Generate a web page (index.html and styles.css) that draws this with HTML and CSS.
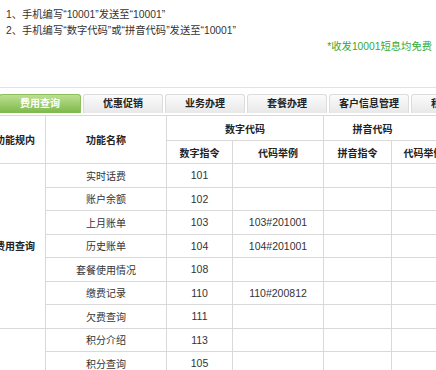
FILE: index.html
```html
<!DOCTYPE html>
<html lang="zh-CN">
<head>
<meta charset="utf-8">
<link rel="stylesheet" href="styles.css">
</head>
<body>
<div class="page">
  <div class="intro">
    <p class="line">1、手机编写“10001”发送至“10001”</p>
    <p class="line">2、手机编写“数字代码”或“拼音代码”发送至“10001”</p>
    <p class="note">*收发10001短息均免费</p>
  </div>
  <div class="tabs">
    <div class="tab active">费用查询</div>
    <div class="tab">优惠促销</div>
    <div class="tab">业务办理</div>
    <div class="tab">套餐办理</div>
    <div class="tab">客户信息管理</div>
    <div class="tab">积分服务</div>
  </div>
  <table class="codes">
    <colgroup>
      <col class="c0"><col class="c1"><col class="c2"><col class="c3"><col class="c4"><col class="c5">
    </colgroup>
    <thead>
      <tr class="h1">
        <th rowspan="2">功能规内</th>
        <th rowspan="2">功能名称</th>
        <th colspan="2">数字代码</th>
        <th colspan="2" class="py">拼音代码</th>
      </tr>
      <tr class="h2">
        <th>数字指令</th>
        <th>代码举例</th>
        <th>拼音指令</th>
        <th>代码举例</th>
      </tr>
    </thead>
    <tbody>
      <tr><th class="group" rowspan="7">费用查询</th><td>实时话费</td><td class="num">101</td><td class="num"></td><td></td><td></td></tr>
      <tr><td>账户余额</td><td class="num">102</td><td class="num"></td><td></td><td></td></tr>
      <tr><td>上月账单</td><td class="num">103</td><td class="num">103#201001</td><td></td><td></td></tr>
      <tr><td>历史账单</td><td class="num">104</td><td class="num">104#201001</td><td></td><td></td></tr>
      <tr><td>套餐使用情况</td><td class="num">108</td><td class="num"></td><td></td><td></td></tr>
      <tr><td>缴费记录</td><td class="num">110</td><td class="num">110#200812</td><td></td><td></td></tr>
      <tr><td>欠费查询</td><td class="num">111</td><td class="num"></td><td></td><td></td></tr>
      <tr><th class="group" rowspan="2"></th><td>积分介绍</td><td class="num">113</td><td class="num"></td><td></td><td></td></tr>
      <tr><td>积分查询</td><td class="num">105</td><td class="num"></td><td></td><td></td></tr>
    </tbody>
  </table>
</div>
</body>
</html>
```

FILE: styles.css
```css
html, body {
  margin: 0;
  padding: 0;
  background: #fff;
  overflow: hidden;
}
body {
  font-family: "Liberation Sans", "Noto Sans CJK SC", sans-serif;
  font-size: 10px;
  color: #333;
}
.page {
  width: 436px;
  height: 370px;
  overflow: hidden;
}
.intro {
  height: 81px;
  padding: 7px 4px 0 6px;
  box-sizing: border-box;
  height: 87px;
}
.line {
  margin: 0;
  line-height: 16px;
  font-size: 10.3px;
  color: #333;
}
.note {
  margin: 0;
  line-height: 16px;
  font-size: 10.3px;
  text-align: right;
  color: #33aa33;
}
.tabs {
  border-top: 1px solid #e2e2e2;
  padding-top: 6px;
  display: flex;
  gap: 2px;
  margin-left: -1px;
  white-space: nowrap;
}
.tab {
  flex: 0 0 80px;
  height: 19px;
  box-sizing: border-box;
  line-height: 18px;
  text-align: center;
  font-weight: bold;
  color: #222;
  background: linear-gradient(#fbfbfb, #e8e8e8);
  border: 1px solid #dcdcdc;
  border-bottom: none;
  border-radius: 3px 3px 0 0;
}
.tab.active {
  flex-basis: 82px;
  color: #fff;
  background: linear-gradient(#bde08f, #7cb84a);
  border-color: #8cc05a;
}
.codes {
  margin-top: 2px;
  margin-left: -16px;
  border-collapse: collapse;
  table-layout: fixed;
  width: 471px;
}
.c0 { width: 61px; }
.c1 { width: 121px; }
.c2 { width: 66px; }
.c3 { width: 91px; }
.c4 { width: 68px; }
.c5 { width: 64px; }
.codes th, .codes td {
  border: 1px solid #d9d9d9;
  padding: 0;
  text-align: center;
  white-space: nowrap;
  overflow: hidden;
}
.codes th {
  font-weight: bold;
  color: #222;
}
.codes th.py { padding-right: 34px; }
.h1 th { height: 24px; }
.h2 th { height: 22px; }
.codes tbody td { height: 22.5px; color: #333; }
.codes .num { font-size: 10.5px; }
```
